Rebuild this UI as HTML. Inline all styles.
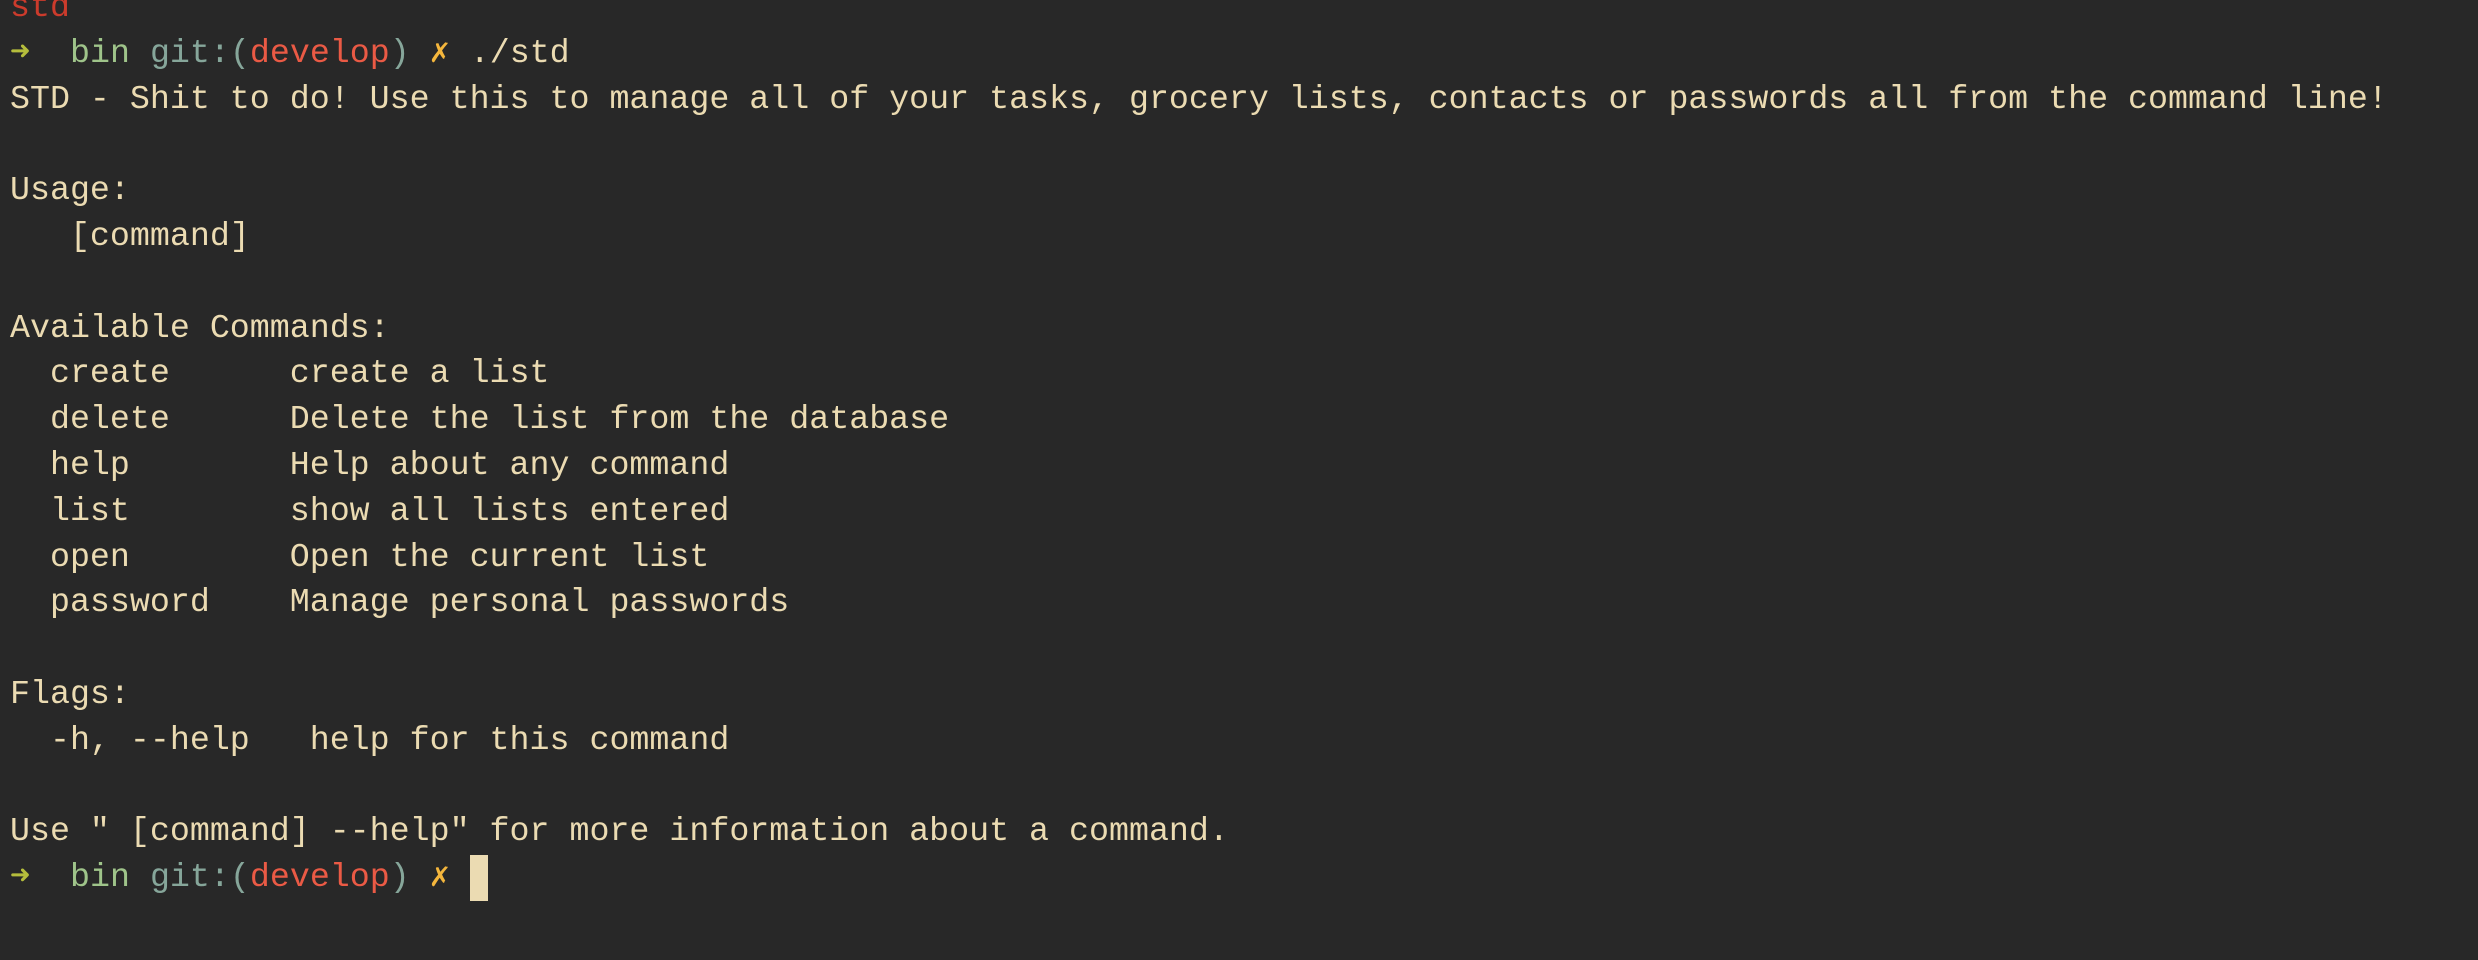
<!DOCTYPE html>
<html><head><meta charset="utf-8"><style>
html,body{margin:0;padding:0;background:#282828;width:2478px;height:960px;overflow:hidden}
pre{position:absolute;left:10px;top:-15px;margin:0;font-family:"Liberation Mono","DejaVu Sans Mono",monospace;font-size:33.3px;line-height:45.8px;color:#ebdbb2;white-space:pre}
.r{color:#cc3b2c}.a{color:#b5bd3c}.g{color:#9fc48a}.q{color:#86a69a}.d{color:#ea5a45}.x{color:#f4b63c}
.c{display:inline-block;width:18px;height:46px;background:#ebdbb2;vertical-align:top;margin-top:0}
</style></head><body><pre><span class="r">std</span>
<span class="a">➜</span>  <span class="g">bin</span> <span class="q">git:(</span><span class="d">develop</span><span class="q">)</span> <span class="x">✗</span> ./std
STD - Shit to do! Use this to manage all of your tasks, grocery lists, contacts or passwords all from the command line!

Usage:
   [command]

Available Commands:
  create      create a list
  delete      Delete the list from the database
  help        Help about any command
  list        show all lists entered
  open        Open the current list
  password    Manage personal passwords

Flags:
  -h, --help   help for this command

Use " [command] --help" for more information about a command.
<span class="a">➜</span>  <span class="g">bin</span> <span class="q">git:(</span><span class="d">develop</span><span class="q">)</span> <span class="x">✗</span> <span class="c"></span></pre></body></html>
